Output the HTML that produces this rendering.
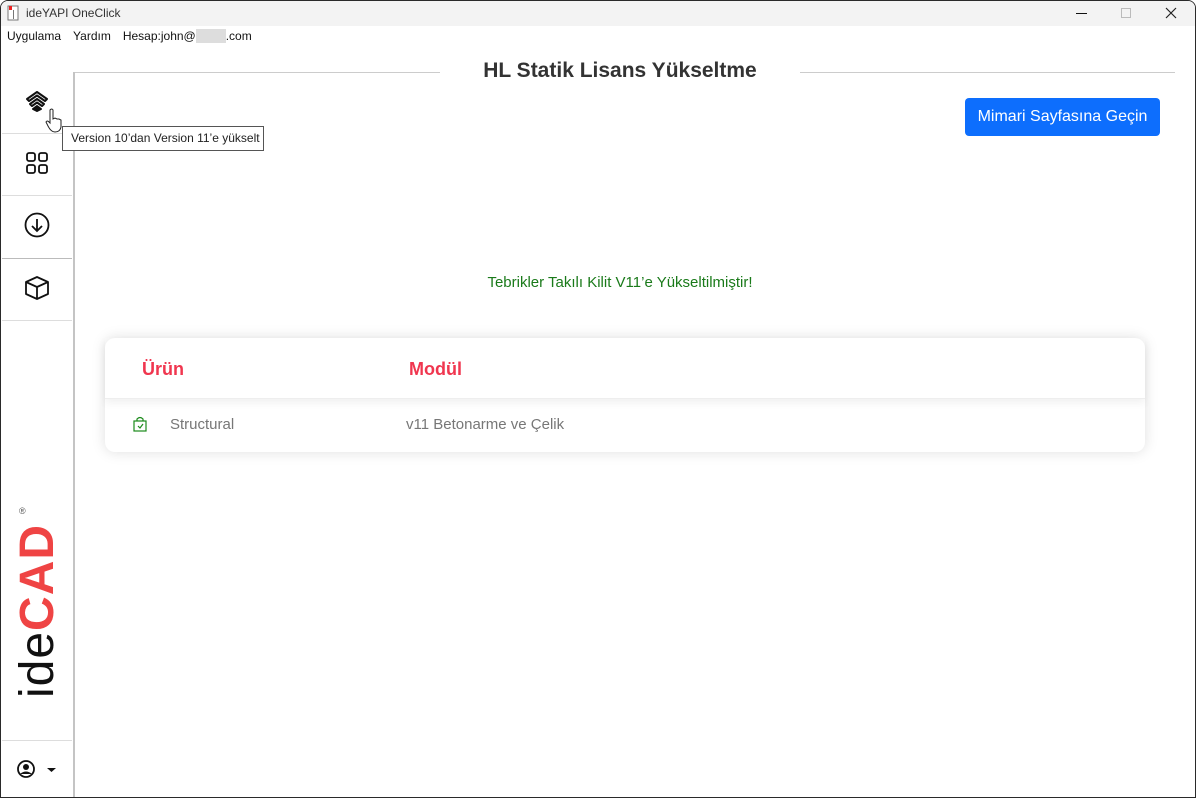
<!DOCTYPE html>
<html><head><meta charset="utf-8"><style>
*{margin:0;padding:0;box-sizing:border-box}
body{width:1196px;height:798px;overflow:hidden;background:#fff;font-family:"Liberation Sans",sans-serif;position:relative}
.win{position:absolute;left:0;top:0;width:1196px;height:798px;border:1px solid #2a2a2a;border-radius:8px 8px 0 0;overflow:hidden;background:#fff}
.title{position:absolute;left:-1px;top:-1px;width:1196px;height:26px;background:#f3f3f3;font-size:12px;color:#333}
.menu{position:absolute;top:28px;left:6px;font-size:12px;color:#111}
.menu span{margin-right:12px}
.side{position:absolute;left:-1px;top:71px;width:75px;height:726px;border-right:2px solid #c4c4c4}
.sep{position:absolute;left:2px;width:70px;height:1px;background:#ddd}
.topline{position:absolute;top:71px;height:1px;background:#ccc}
h1{position:absolute;top:58px;left:439px;width:360px;text-align:center;font-size:21px;font-weight:bold;color:#333}
.btn{position:absolute;left:964px;top:97px;width:195px;height:38px;background:#0d6efd;color:#fff;border-radius:4px;font-size:16px;text-align:center;line-height:38px}
.card{position:absolute;left:104px;top:337px;width:1040px;height:114px;background:#fff;border-radius:10px;box-shadow:0 0 14px rgba(0,0,0,.13)}
.hd{height:61px;border-bottom:1px solid #eee;box-shadow:0 4px 8px rgba(0,0,0,.06);font-size:18px;color:#f0364f;font-weight:bold}
.tip{position:absolute;left:61px;top:125px;width:202px;height:25px;border:1px solid #555;background:#fff;font-size:12px;color:#222;line-height:23px;padding-left:8px}
</style></head><body><div class="win">
<div class="title">
 <svg style="position:absolute;left:7px;top:5px" width="12" height="16"><rect x="1" y="1" width="10" height="14" fill="#fff" stroke="#777"/><rect x="2" y="1" width="3" height="4" fill="#e22"/><rect x="6" y="5" width="1" height="9" fill="#777"/></svg>
 <span style="position:absolute;left:26px;top:6px">ideYAPI OneClick</span>
 <div style="position:absolute;left:1076px;top:13px;width:11px;height:1px;background:#111"></div>
 <div style="position:absolute;left:1121px;top:8px;width:10px;height:10px;border:1px solid #bbb"></div>
 <svg style="position:absolute;left:1165px;top:7px" width="12" height="12"><path d="M1 1L11 11M11 1L1 11" stroke="#222" stroke-width="1.2"/></svg>
</div>
<div class="menu"><span>Uygulama</span><span>Yardım</span><span>Hesap:john@<span style="background:#ddd;color:#ddd;margin:0">xxxxx</span>.com</span></div>
<div class="side">
 <svg style="position:absolute;left:25px;top:17px" width="24" height="24" viewBox="0 0 24 24" fill="none" stroke="#111" stroke-width="2" stroke-linejoin="round"><path d="M2 10L12 3L22 10L20 12L12 6.5L4 12Z"/><path d="M5 15L12 10L19 15L17 17L12 13.5L7 17Z"/><path d="M8 20L12 17L16 20L12 22Z" fill="#111"/></svg>
 <div class="sep" style="top:61px"></div><div class="sep" style="top:123px"></div><div class="sep" style="top:186px;background:#bbb"></div><div class="sep" style="top:248px"></div><div class="sep" style="top:668px"></div>
 <svg style="position:absolute;left:26px;top:80px" width="22" height="22" fill="none" stroke="#111" stroke-width="1.8"><rect x="1" y="1" width="8" height="8" rx="2"/><rect x="13" y="1" width="8" height="8" rx="2"/><rect x="1" y="13" width="8" height="8" rx="2"/><rect x="13" y="13" width="8" height="8" rx="2"/></svg>
 <svg style="position:absolute;left:24px;top:140px" width="26" height="26" fill="none" stroke="#111" stroke-width="1.8"><circle cx="13" cy="13" r="11.5"/><path d="M13 7V19M8 14L13 19L18 14"/></svg>
 <svg style="position:absolute;left:24px;top:203px" width="26" height="26" fill="none" stroke="#111" stroke-width="1.8" stroke-linejoin="round"><path d="M13 2L24 7V19L13 24L2 19V7Z"/><path d="M2 7L13 12L24 7M13 12V24"/></svg>
 <div style="position:absolute;left:-62px;top:514px;width:200px;height:50px;transform:rotate(-90deg);font-size:48px;line-height:50px;white-space:nowrap;letter-spacing:1px;text-align:center"><span style="font-weight:300;color:#111">ide</span><span style="font-weight:bold;color:#ef4444">CAD</span></div>
 <div style="position:absolute;left:19px;top:434px;font-size:9px;color:#555">®</div>
 <svg style="position:absolute;left:16px;top:687px" width="42" height="20"><circle cx="10" cy="10" r="8" fill="none" stroke="#111" stroke-width="1.8"/><circle cx="10" cy="8" r="3" fill="#111"/><path d="M4 15Q10 10 16 15" fill="#111"/><path d="M31 9H40L35.5 13Z" fill="#111"/></svg>
</div>
<div class="topline" style="left:74px;width:365px"></div>
<div class="topline" style="left:799px;width:375px"></div>
<h1>HL Statik Lisans Yükseltme</h1>
<div class="btn">Mimari Sayfasına Geçin</div>
<div style="position:absolute;top:273px;left:0;width:1246px;text-align:center;font-size:15px;color:#1a7a1a;padding-right:8px">Tebrikler Takılı Kilit V11’e Yükseltilmiştir!</div>
<div class="card">
 <div class="hd"><span style="position:absolute;left:37px;top:21px">Ürün</span><span style="position:absolute;left:304px;top:21px">Modül</span></div>
 <svg style="position:absolute;left:28px;top:78px" width="15" height="16" fill="none" stroke="#1a8a1a" stroke-width="1.2"><rect x="1" y="5" width="12" height="10"/><path d="M4 5V3Q7 0 10 3V5"/><path d="M5 10L7 12L10 8"/></svg>
 <span style="position:absolute;left:65px;top:78px;font-size:15px;color:#777">Structural</span>
 <span style="position:absolute;left:301px;top:78px;font-size:15px;color:#777">v11 Betonarme ve Çelik</span>
</div>
<div class="tip">Version 10’dan Version 11’e yükselt</div>
<svg style="position:absolute;left:44px;top:107px" width="20" height="26"><path d="M5 2Q7 0 8 2V11L10 10L12 11L14 11L16 12V19Q15 24 10 24Q6 24 3 18L1 14Q2 12 4 14L5 15Z" fill="#fff" stroke="#222" stroke-width="1"/></svg>
</div></body></html>
